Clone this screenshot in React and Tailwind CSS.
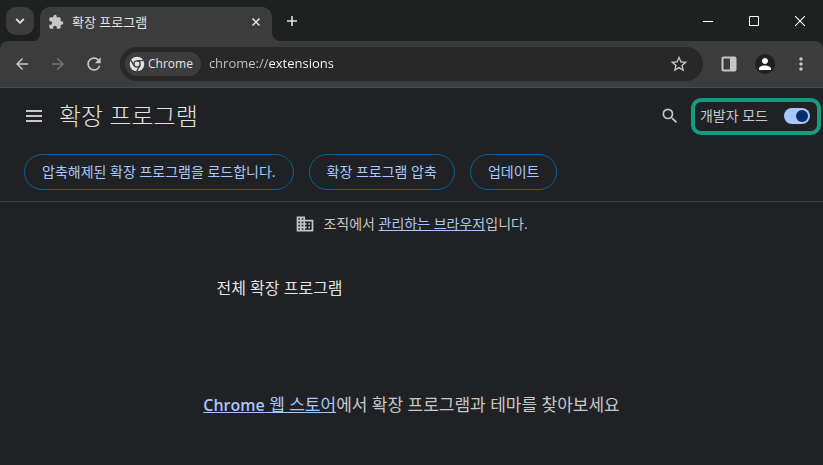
import React from "react";
import { MdExtension, MdArrowBack, MdArrowForward, MdRefresh, MdStarBorder, MdPerson, MdMoreVert, MdSearch, MdBusiness } from "react-icons/md";

function ChromeLogo() {
  return (
    <svg width="16" height="16" viewBox="0 0 16 16" aria-hidden="true">
      <circle cx="8" cy="8" r="7.3" fill="#e3e3e3" />
      <circle cx="8" cy="8" r="3.1" fill="none" stroke="#3c3c3c" strokeWidth="1.3" />
      <path d="M8 4.6H14.6M5 9.7L1.8 4.2M11 9.7L7.8 15.2" stroke="#3c3c3c" strokeWidth="1.3" fill="none" />
    </svg>
  );
}

function TabStrip() {
  return (
    <header className="flex h-[41px] items-end bg-[#1f2120] text-[#e3e3e3]">
      <button aria-label="탭 검색" className="mb-1.5 ml-1.5 flex size-7 items-center justify-center rounded-[10px] bg-[#3c3c3c]">
        <svg width="10" height="6" viewBox="0 0 10 6" fill="none" stroke="currentColor" strokeWidth="1.8"><path d="M1.2 1L5 4.8L8.8 1" /></svg>
      </button>
      <div className="flex w-1.5 justify-end">
        <svg className="h-2 w-1.5 shrink-0" viewBox="0 0 6 8" fill="#3c3c3c"><path d="M6 0V8H0C4 8 6 4 6 0Z" /></svg>
      </div>
      <div className="flex h-[34px] w-[232px] items-center rounded-t-[10px] bg-[#3c3c3c] pb-[5px] pl-2 pr-2.5">
        <MdExtension className="size-4 text-[#c7c7c7]" />
        <span className="ml-2 flex-1 text-[13px] leading-5">확장 프로그램</span>
        <button aria-label="탭 닫기" className="flex size-3 items-center justify-center">
          <svg width="8" height="8" viewBox="0 0 8 8" stroke="currentColor" strokeWidth="1.5"><path d="M.5 .5L7.5 7.5M7.5 .5L.5 7.5" /></svg>
        </button>
      </div>
      <svg className="h-2 w-2" viewBox="0 0 8 8" fill="#3c3c3c"><path d="M0 0V8H8C4 8 0 4 0 0Z" /></svg>
      <button aria-label="새 탭" className="mb-2 flex size-6 items-center justify-center">
        <svg width="12" height="12" viewBox="0 0 12 12" stroke="currentColor" strokeWidth="1.6"><path d="M6 1V11M1 6H11" /></svg>
      </button>
      <div className="ml-auto flex h-full items-center text-white">
        <button aria-label="최소화" className="flex h-full w-[46px] items-center justify-center">
          <svg width="10" height="10" viewBox="0 0 10 10" stroke="currentColor"><path d="M0 5.5H10" /></svg>
        </button>
        <button aria-label="최대화" className="flex h-full w-[46px] items-center justify-center">
          <svg width="10" height="10" viewBox="0 0 10 10" fill="none" stroke="currentColor"><path d="M.5 .5H9.5V9.5H.5Z" /></svg>
        </button>
        <button aria-label="닫기" className="flex h-full w-[46px] items-center justify-center">
          <svg width="10" height="10" viewBox="0 0 10 10" stroke="currentColor" strokeWidth="1.1"><path d="M0 0L10 10M10 0L0 10" /></svg>
        </button>
      </div>
    </header>
  );
}

function Toolbar() {
  return (
    <div className="bg-[#1f2120]">
      <nav className="flex h-[47px] items-center rounded-t-lg border-b border-[#4a4a4a] bg-[#3c3c3c] pl-[13px] pr-3 text-[#c7c7c7]">
        <button aria-label="뒤로"><MdArrowBack className="size-[18px]" /></button>
        <button aria-label="앞으로" className="ml-[18px] text-[#757575]" disabled><MdArrowForward className="size-[18px]" /></button>
        <button aria-label="새로고침" className="ml-[17px]"><MdRefresh className="size-5" /></button>
        <div className="ml-4 flex h-[34px] flex-1 items-center rounded-full bg-[#282828] pl-[5px] pr-3.5">
          <button className="flex h-6 items-center gap-[3px] rounded-full bg-[#3c3c3c] pl-1 pr-2 text-[12px] text-[#e3e3e3]">
            <ChromeLogo />
            Chrome
          </button>
          <input
            aria-label="주소창"
            defaultValue="chrome://extensions"
            className="ml-2 min-w-0 flex-1 bg-linear-to-r from-[#c7c7c7] from-[60px] to-white to-[60px] bg-clip-text text-[13px] text-transparent outline-none"
          />
          <button aria-label="북마크에 추가"><MdStarBorder className="size-5" /></button>
        </div>
        <button aria-label="측면 패널" className="ml-[18px]">
          <svg width="16" height="16" viewBox="0 0 16 16"><rect x=".5" y=".5" width="15" height="15" rx="2" fill="#c7c7c7" /><path d="M2.5 2.5H9V13.5H2.5Z" fill="#3c3c3c" /></svg>
        </button>
        <button aria-label="프로필" className="ml-[18px] flex size-5 items-center justify-center rounded-full bg-[#1f2120] text-white"><MdPerson className="size-[18px]" /></button>
        <button aria-label="메뉴" className="ml-4"><MdMoreVert className="size-5" /></button>
      </nav>
    </div>
  );
}

function ActionButton({ children }) {
  return <button className="h-9 rounded-full border border-[#04639b] px-[17px] pb-0.5 text-[14px] text-[#a8c7fa]">{children}</button>;
}

export default function App() {
  return (
    <div className="min-h-screen bg-[#202124] font-['Open_Sans','Noto_Sans_CJK_KR',sans-serif] text-[#c7c7c7]">
      <TabStrip />
      <Toolbar />
      <main>
        <div className="flex h-14 items-center pl-[26px] pr-[2px]">
          <button aria-label="기본 메뉴">
            <svg width="16" height="12" viewBox="0 0 16 12" fill="currentColor"><path d="M0 0H16V2H0ZM0 5H16V7H0ZM0 10H16V12H0Z" /></svg>
          </button>
          <h1 className="ml-[17px] text-[24px] font-light leading-8 text-[#e3e3e3]">확장 프로그램</h1>
          <button aria-label="검색" className="ml-auto mr-[11px]"><MdSearch className="size-5" /></button>
          <label className="flex h-[37px] items-center gap-4 rounded-[10px] border-4 border-[#159b80] pl-[5px] pr-[7px] text-[14px] leading-5">
            개발자 모드
            <input type="checkbox" role="switch" defaultChecked className="h-4 w-[26px] appearance-none rounded-full bg-[#a8c7fa] before:ml-3 before:mt-[2px] before:block before:size-3 before:rounded-full before:bg-[#062e6f]" />
          </label>
        </div>
        <div className="flex gap-[15px] border-b border-[#3c4043] px-6 pb-[11px] pt-[10px]">
          <ActionButton>압축해제된 확장 프로그램을 로드합니다.</ActionButton>
          <ActionButton>확장 프로그램 압축</ActionButton>
          <ActionButton>업데이트</ActionButton>
        </div>
        <p className="mt-3 flex items-center justify-center gap-2 text-[14px] leading-5">
          <MdBusiness className="size-5" />
          <span>조직에서 <a href="#managed" className="text-[#a8c7fa] underline">관리하는 브라우저</a>입니다.</span>
        </p>
        <section className="mx-auto mt-[42px] w-full max-w-[390px]">
          <h2 className="text-[16px] leading-6 text-[#e3e3e3]">전체 확장 프로그램</h2>
        </section>
        <p className="mt-[93px] text-center text-[17px] leading-6">
          <a href="#store" className="text-[#a8c7fa] underline"><span className="text-[16px] font-semibold">Chrome</span> 웹 스토어</a>에서 확장 프로그램과 테마를 찾아보세요
        </p>
      </main>
    </div>
  );
}
